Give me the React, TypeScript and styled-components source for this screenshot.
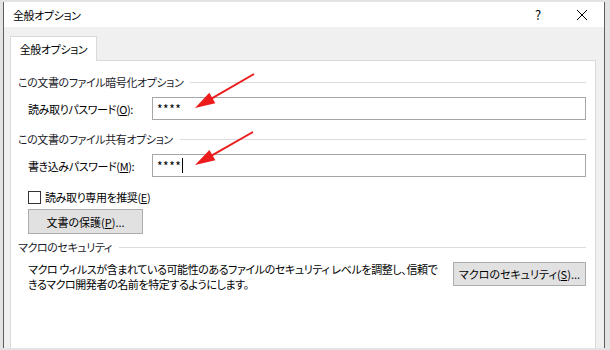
import React from "react"
import styled, { createGlobalStyle } from "styled-components"

const GlobalStyle = createGlobalStyle`
  html, body {
    margin: 0;
    padding: 0;
    background: #e3e3e3;
  }
  body {
    font-family: "Noto Sans CJK JP", "Noto Sans", sans-serif;
    font-size: 11px;
    letter-spacing: -0.4px;
    color: #000;
    font-feature-settings: "palt";
  }
`

const Window = styled.div`
  position: relative;
  width: 600px;
  height: 346px;
  margin: 2px 0 0 3px;
  border-left: 1px solid #5d5d5d;
  border-right: 1px solid #5d5d5d;
  display: flex;
  flex-direction: column;
  overflow: hidden;
`

const TitleBar = styled.header`
  height: 25px;
  flex-shrink: 0;
  background: #fff;
  display: flex;
  align-items: center;
  padding-left: 9px;
  line-height: 16px;
`

const Title = styled.span`
  flex: 1;
`

const TitleButton = styled.button`
  border: 0;
  background: transparent;
  padding: 0;
  width: 44px;
  height: 25px;
  display: flex;
  align-items: center;
  justify-content: center;
  font: inherit;
  font-size: 13px;
  color: #000;
`

const Body = styled.div`
  flex: 1;
  background: #f0f0f0;
  padding: 9px 8px 0 6px;
  display: flex;
  flex-direction: column;
`

const TabStrip = styled.div`
  display: flex;
  height: 24px;
`

const Tab = styled.div`
  width: 87px;
  height: 25px;
  box-sizing: border-box;
  background: #fff;
  border: 1px solid #d9d9d9;
  border-bottom: 0;
  display: flex;
  align-items: center;
  justify-content: center;
  position: relative;
  z-index: 1;
`

const Panel = styled.section`
  flex: 1;
  background: #fff;
  border: 1px solid #d9d9d9;
  border-bottom: 0;
  padding: 13px 9px 0 7px;
  display: flex;
  flex-direction: column;
`

const GroupHeader = styled.div<{ $gap: number }>`
  display: flex;
  align-items: center;
  height: 16px;
  margin-top: ${(p) => p.$gap}px;
  color: #1b1b2a;

  &::after {
    content: "";
    flex: 1;
    height: 1px;
    background: #dcdcdc;
    margin-left: 7px;
  }
`

const FieldRow = styled.div`
  display: flex;
  align-items: center;
  margin: 7px 0 0 10px;
`

const Label = styled.label`
  width: 124px;
  flex-shrink: 0;
`

const Input = styled.div`
  flex: 1;
  height: 23px;
  box-sizing: border-box;
  border: 1px solid #a6a6a6;
  display: flex;
  align-items: center;
  padding-left: 4px;
  font-size: 12px;
  letter-spacing: 0.5px;
`

const Caret = styled.span`
  display: inline-block;
  width: 1px;
  height: 15px;
  background: #000;
  margin-left: 1px;
`

const CheckRow = styled.label`
  display: flex;
  align-items: center;
  height: 16px;
  margin: 12px 0 0 10px;
  gap: 4px;
`

const Box = styled.span`
  width: 13px;
  height: 13px;
  box-sizing: border-box;
  border: 1px solid #333;
  background: #fff;
`

const Button = styled.button<{ $width: number; $height: number }>`
  width: ${(p) => p.$width}px;
  height: ${(p) => p.$height}px;
  box-sizing: border-box;
  border: 1px solid #adadad;
  background: #e1e1e1;
  font: inherit;
  color: #000;
  padding: 0;
  white-space: nowrap;
  flex-shrink: 0;
`

const ButtonRow = styled.div`
  margin: 4px 0 0 10px;
`

const MacroRow = styled.div`
  display: flex;
  align-items: flex-start;
  margin: 7px 0 0 10px;
`

const Note = styled.p`
  flex: 1;
  margin: 0;
  line-height: 15px;
  white-space: nowrap;
`

const U = styled.span`
  text-decoration: underline;
  text-underline-offset: 1px;
`

const Arrows = styled.svg`
  position: absolute;
  left: -4px;
  top: -2px;
  pointer-events: none;
`

function Arrow({ x1, y1, x2, y2 }: { x1: number; y1: number; x2: number; y2: number }) {
  const dx = x2 - x1
  const dy = y2 - y1
  const len = Math.hypot(dx, dy)
  const ux = dx / len
  const uy = dy / len
  const bx = x2 - ux * 20
  const by = y2 - uy * 20
  const px = -uy * 6
  const py = ux * 6
  return (
    <g>
      <line x1={x1} y1={y1} x2={bx + ux * 2} y2={by + uy * 2} stroke="#ec1c1c" strokeWidth={2} />
      <polygon
        points={`${x2},${y2} ${bx + px},${by + py} ${bx - px},${by - py}`}
        fill="#ec1c1c"
      />
    </g>
  )
}

export default function App() {
  return (
    <>
      <GlobalStyle />
      <Window>
        <TitleBar>
          <Title>全般オプション</Title>
          <TitleButton type="button">?</TitleButton>
          <TitleButton type="button">
            <svg width="12" height="12" viewBox="0 0 12 12">
              <path d="M1 1 L11 11 M11 1 L1 11" stroke="#000" strokeWidth={1} />
            </svg>
          </TitleButton>
        </TitleBar>
        <Body>
          <TabStrip>
            <Tab>全般オプション</Tab>
          </TabStrip>
          <Panel>
            <GroupHeader $gap={0}>この文書のファイル暗号化オプション</GroupHeader>
            <FieldRow>
              <Label>
                読み取りパスワード(<U>O</U>):
              </Label>
              <Input>****</Input>
            </FieldRow>
            <GroupHeader $gap={11}>この文書のファイル共有オプション</GroupHeader>
            <FieldRow>
              <Label>
                書き込みパスワード(<U>M</U>):
              </Label>
              <Input>
                ****
                <Caret />
              </Input>
            </FieldRow>
            <CheckRow>
              <Box />
              <span>
                読み取り専用を推奨(<U>E</U>)
              </span>
            </CheckRow>
            <ButtonRow>
              <Button type="button" $width={115} $height={25}>
                文書の保護(<U>P</U>)...
              </Button>
            </ButtonRow>
            <GroupHeader $gap={5}>マクロのセキュリティ</GroupHeader>
            <MacroRow>
              <Note>
                マクロ ウィルスが含まれている可能性のあるファイルのセキュリティ レベルを調整し、信頼で
                <br />
                きるマクロ開発者の名前を特定するようにします。
              </Note>
              <Button type="button" $width={133} $height={24}>
                マクロのセキュリティ(<U>S</U>)...
              </Button>
            </MacroRow>
          </Panel>
        </Body>
        <Arrows width="610" height="350">
          <Arrow x1={254} y1={74} x2={195} y2={108} />
          <Arrow x1={253} y1={132} x2={195} y2={165} />
        </Arrows>
      </Window>
    </>
  )
}
